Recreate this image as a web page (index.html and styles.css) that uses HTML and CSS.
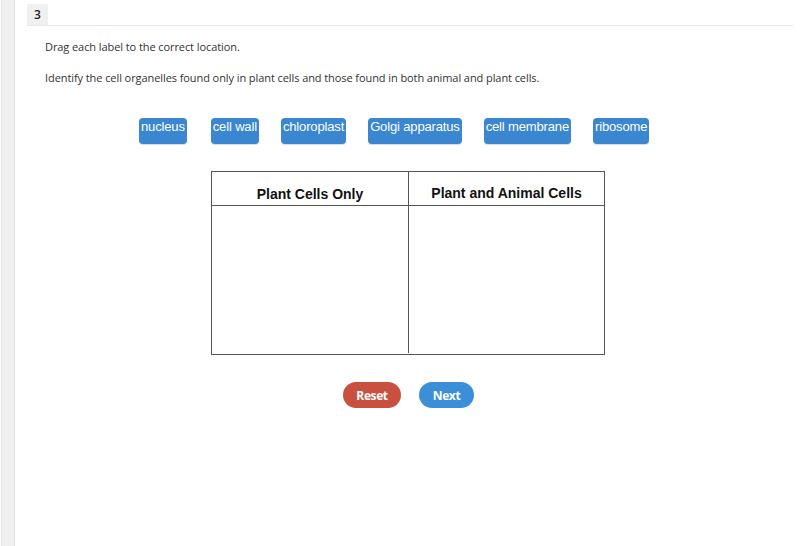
FILE: index.html
```html
<!DOCTYPE html>
<html>
<head>
<meta charset="utf-8">
<link rel="stylesheet" href="styles.css">
</head>
<body>
<div class="page">
  <aside class="strip"></aside>
  <main class="main">
    <div class="tabbar"><span class="tab">3</span></div>
    <div class="content">
      <p class="p1">Drag each label to the correct location.</p>
      <p class="p2">Identify the cell organelles found only in plant cells and those found in both animal and plant cells.</p>
      <div class="labels">
        <span class="lbl">nucleus</span>
        <span class="lbl">cell wall</span>
        <span class="lbl">chloroplast</span>
        <span class="lbl">Golgi apparatus</span>
        <span class="lbl">cell membrane</span>
        <span class="lbl">ribosome</span>
      </div>
      <div class="table">
        <div class="th th1">Plant Cells Only</div>
        <div class="th th2">Plant and Animal Cells</div>
        <div class="td td1"></div>
        <div class="td td2"></div>
      </div>
      <div class="buttons">
        <button class="btn reset">Reset</button>
        <button class="btn next">Next</button>
      </div>
    </div>
  </main>
</div>
</body>
</html>
```
FILE: styles.css
```css
html, body { margin: 0; padding: 0; background: #fff; }
body { font-family: "Open Sans", sans-serif; color: #333; width: 800px; height: 546px; overflow: hidden; }
.page { display: flex; height: 546px; }
.strip { width: 12px; margin-left: 1px; background: #f0f0f0; border-left: 1px solid #e6e6e6; border-right: 1px solid #e2e2e2; flex: none; }
.main { flex: 1; padding-left: 12px; padding-right: 7px; }
.tabbar { height: 21px; margin-top: 4px; border-bottom: 1px solid #e8e8e8; display: flex; }
.tab { width: 21px; height: 21px; background: #f0f0f0; font-size: 12px; font-weight: 600; color: #222; display: flex; align-items: center; padding-left: 7px; box-sizing: border-box; }
.content { padding-left: 18px; }
.p1, .p2 { margin: 0; font-size: 11px; line-height: 15px; color: #333; letter-spacing: -0.08px; }
.p1 { padding-top: 13px; }
.p2 { padding-top: 16px; }
.labels { display: flex; margin-top: 33px; padding-left: 94px; height: 26px; }
.lbl { background: #3a86d0; color: #fff; font-family: "Liberation Sans", Arial, sans-serif; font-size: 13px; line-height: 15px; height: 26px; box-sizing: border-box; padding: 1px 2px 0 2px; border-radius: 4px; margin-right: 22px; letter-spacing: -0.15px; box-shadow: 0 1px 1px rgba(0,0,0,0.15); }
.lbl:first-child { margin-right: 24px; }
.table { display: grid; grid-template-columns: 197px 195px; grid-template-rows: 34px 147px; margin-top: 27px; margin-left: 166px; width: 394px; border: 1px solid #555; box-sizing: border-box; height: 184px; }
.th { font-family: "Liberation Sans", Arial, sans-serif; font-weight: bold; font-size: 14px; color: #111; display: flex; justify-content: center; border-bottom: 1px solid #555; box-sizing: border-box; }
.th1 { border-right: 1px solid #555; padding-top: 14px; }
.th2 { padding-top: 13px; }
.td1 { border-right: 1px solid #555; }
.buttons { display: flex; margin-top: 27px; margin-left: 298px; gap: 18px; }
.btn { border: none; height: 26px; border-radius: 13px; color: #fff; font-family: "Open Sans", sans-serif; font-weight: 700; font-size: 12px; padding: 0; letter-spacing: -0.4px; }
.reset { width: 58px; background: #c9503e; }
.next { width: 55px; background: #3b8fd9; }
```
